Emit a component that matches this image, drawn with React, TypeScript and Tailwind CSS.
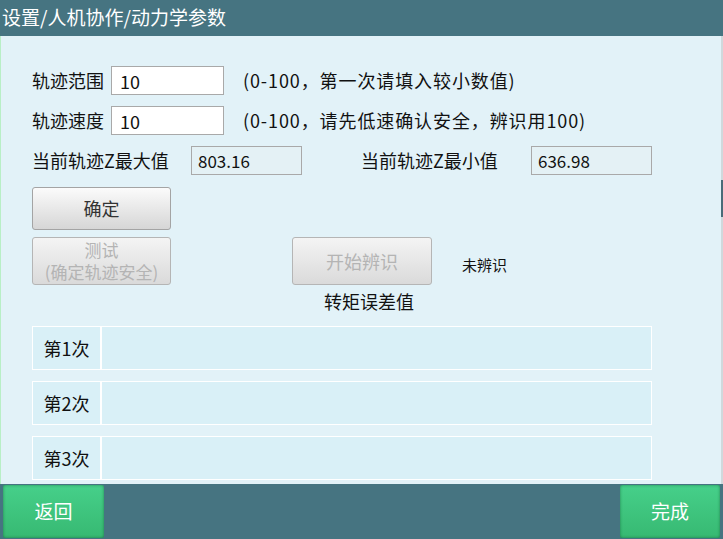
import React from "react";

const font = { fontFamily: '"Noto Sans CJK SC", "Noto Sans", sans-serif' };

function ValueBox({ value, width }: { value: string; width: string }) {
  return (
    <div
      className={`${width} h-[29px] border border-[#a9a9a9] bg-[#e4f1f5] flex items-center pl-[6px] text-[17px] text-[#111]`}
    >
      {value}
    </div>
  );
}

function Field({ label, value, hint }: { label: string; value: string; hint: string }) {
  return (
    <div className="flex items-center h-[29px]">
      <span className="w-[79px] text-[18px] text-[#111] whitespace-nowrap">{label}</span>
      <div className="w-[113px] h-[29px] border border-[#a9a9a9] bg-white flex items-center pl-[8px] pt-[2px] text-[18px] text-[#111]">
        {value}
      </div>
      <span className="ml-[19px] text-[18px] tracking-[0.9px] text-[#111] whitespace-nowrap">{hint}</span>
    </div>
  );
}

export default function App() {
  const rows = ["第1次", "第2次", "第3次"];

  return (
    <div className="w-[723px] h-[539px] flex flex-col overflow-hidden bg-[#e2f2f8]" style={font}>
      {/* title bar */}
      <div className="h-[36px] bg-[#467481] flex items-center pl-[2px] pb-[2px] text-[19px] text-white shrink-0">
        设置/人机协作/动力学参数
      </div>

      <div className="flex-1 flex min-h-0">
        <div className="w-px bg-[#b8efc6]" />
        <div className="flex-1 min-h-0 overflow-hidden pl-[31px]">
          <div className="mt-[30px]">
            <Field label="轨迹范围" value="10" hint="(0-100，第一次请填入较小数值)" />
          </div>
          <div className="mt-[11px]">
            <Field label="轨迹速度" value="10" hint="(0-100，请先低速确认安全，辨识用100)" />
          </div>

          <div className="mt-[11px] flex items-center">
            <span className="w-[159px] text-[18px] text-[#111] whitespace-nowrap">当前轨迹Z最大值</span>
            <ValueBox value="803.16" width="w-[111px]" />
            <span className="ml-[59px] w-[170px] text-[18px] text-[#111] whitespace-nowrap">当前轨迹Z最小值</span>
            <ValueBox value="636.98" width="w-[121px]" />
          </div>

          <button className="mt-[12px] w-[139px] h-[43px] rounded-[3px] border border-[#a4a4a4] bg-gradient-to-b from-[#fbfbfb] to-[#d6d6d6] text-[18px] text-[#333] flex items-center justify-center">
            确定
          </button>

          <div className="mt-[7px] flex items-start">
            <button className="w-[139px] h-[48px] rounded-[3px] border border-[#b5b5b5] bg-gradient-to-b from-[#f4f4f4] to-[#dadada] text-[17px] leading-[22px] text-[#b4b4b4] flex flex-col items-center justify-center">
              <span className="block">测试</span>
              <span className="block">(确定轨迹安全)</span>
            </button>
            <div className="ml-[121px] flex flex-col items-center w-[140px]">
              <button className="w-[140px] h-[48px] rounded-[3px] border border-[#b5b5b5] bg-gradient-to-b from-[#f4f4f4] to-[#dadada] text-[18px] text-[#b4b4b4] flex items-center justify-center">
                开始辨识
              </button>
              <span className="mt-[4px] ml-[14px] text-[18px] leading-[24px] text-[#111] whitespace-nowrap">转矩误差值</span>
            </div>
            <span className="ml-[30px] mt-[17px] text-[15px] text-[#111] whitespace-nowrap">未辨识</span>
          </div>

          <div className="mt-[13px] flex flex-col gap-[11px]">
            {rows.map((r) => (
              <div key={r} className="w-[620px] h-[44px] border border-white bg-[#d9f0f7] flex">
                <div className="w-[69px] border-r-2 border-white flex items-center justify-center text-[18px] text-[#111]">
                  {r}
                </div>
                <div className="flex-1" />
              </div>
            ))}
          </div>
        </div>
        <div className="w-[2px] bg-[#d0d8dc] flex flex-col">
          <div className="h-[144px]" />
          <div className="h-[37px] bg-[#4a6b78]" />
        </div>
      </div>

      {/* bottom bar */}
      <div className="h-[55px] bg-[#467481] flex items-center justify-between px-[3px] shrink-0">
        <button className="w-[101px] h-[53px] rounded-[2px] bg-gradient-to-b from-[#46d08a] to-[#37b972] shadow-[inset_0_0_3px_rgba(0,60,30,0.5)] text-[19px] text-white flex items-center justify-center">
          返回
        </button>
        <button className="w-[100px] h-[53px] rounded-[2px] bg-gradient-to-b from-[#46d08a] to-[#37b972] shadow-[inset_0_0_3px_rgba(0,60,30,0.5)] text-[19px] text-white flex items-center justify-center">
          完成
        </button>
      </div>
    </div>
  );
}
